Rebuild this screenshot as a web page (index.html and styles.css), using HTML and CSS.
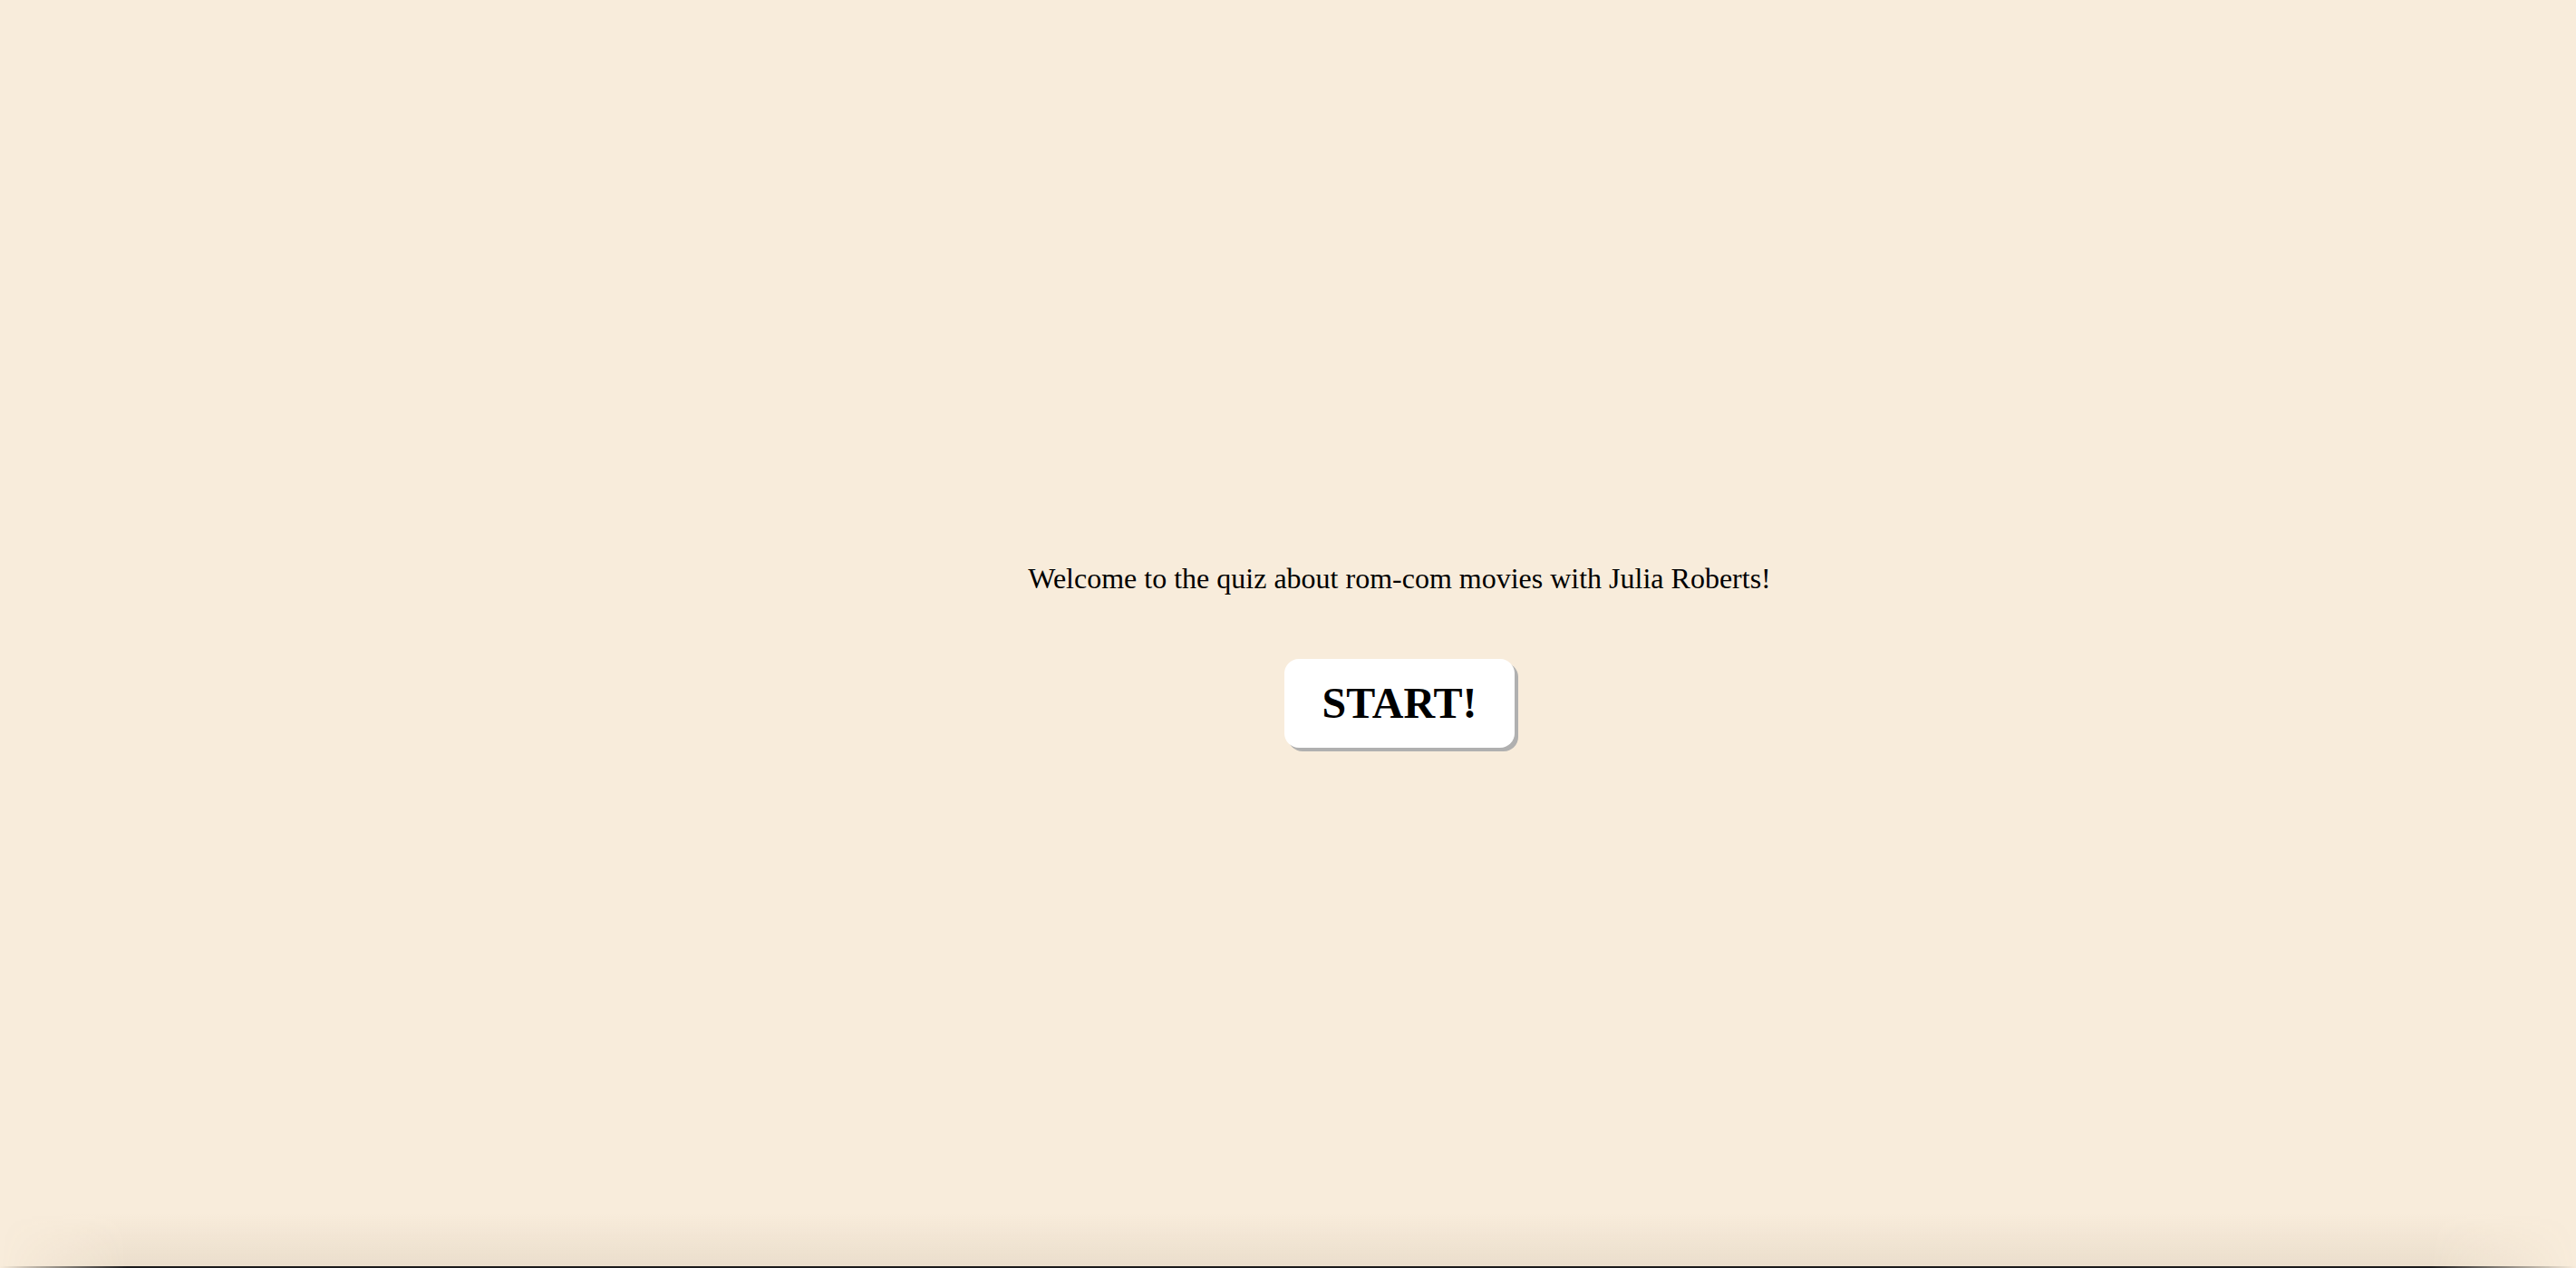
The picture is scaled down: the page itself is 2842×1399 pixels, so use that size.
FILE: index.html
```html
<!DOCTYPE html>
<html lang="en">
<head>
<meta charset="utf-8">
<title>Julia Roberts Rom-Com Quiz</title>
<link rel="stylesheet" href="styles.css">
</head>
<body>
<main class="quiz">
  <p class="welcome">Welcome to the quiz about rom-com movies with Julia Roberts!</p>
  <button class="start-btn" type="button">START!</button>
</main>
<div class="window-edge"></div>
</body>
</html>
```
FILE: styles.css
```css
html, body {
  margin: 0;
  padding: 0;
  height: 100%;
}
body {
  background: #f8ecdb;
  font-family: "Liberation Serif", "Times New Roman", serif;
  color: #000;
  overflow: hidden;
  position: relative;
}
.quiz {
  height: 100%;
  box-sizing: border-box;
  padding-left: 246px;
  padding-top: 46px;
  display: flex;
  flex-direction: column;
  align-items: center;
  justify-content: center;
}
.welcome {
  margin: 0 0 70px;
  font-size: 32px;
  line-height: 1.15;
}
.start-btn {
  font-family: "Liberation Serif", "Times New Roman", serif;
  font-weight: bold;
  font-size: 48px;
  line-height: 56px;
  padding: 21px 42px;
  background: #fff;
  color: #000;
  border: none;
  border-radius: 16px;
  box-shadow: 4px 4px 0 #b0b0b0;
  cursor: pointer;
}
.window-edge {
  position: absolute;
  left: 0;
  right: 0;
  bottom: 0;
  height: 60px;
  pointer-events: none;
  background: linear-gradient(to bottom, rgba(120, 100, 70, 0), rgba(120, 100, 70, 0.1));
  -webkit-mask-image: linear-gradient(to right, transparent 0, #000 140px, #000 calc(100% - 160px), transparent 100%);
  mask-image: linear-gradient(to right, transparent 0, #000 140px, #000 calc(100% - 160px), transparent 100%);
}
.window-edge::after {
  content: "";
  position: absolute;
  left: 0;
  right: 0;
  bottom: 0;
  height: 2px;
  background: #1c1c1c;
}
```
